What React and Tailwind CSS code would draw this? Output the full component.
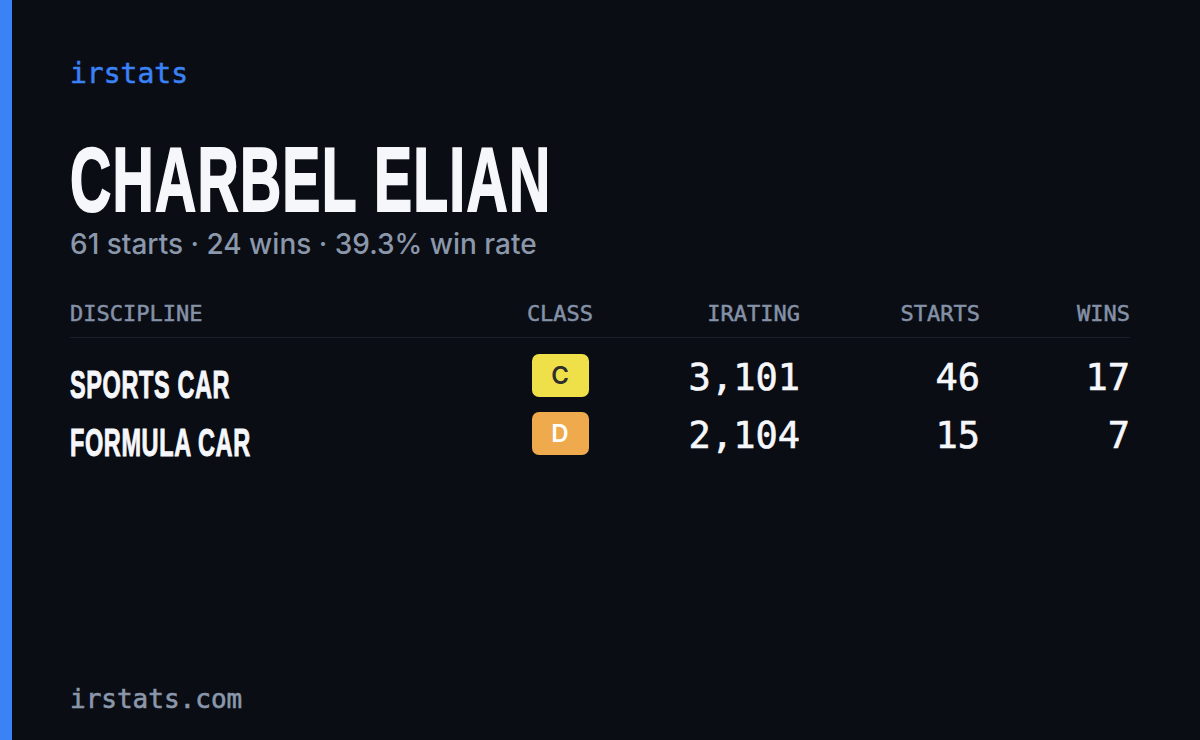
import React from 'react';

const rows = [
  { name: 'SPORTS CAR', cls: 'C', badge: 'bg-[#efe04a] text-[#2e2e2e]', irating: '3,101', starts: '46', wins: '17' },
  { name: 'FORMULA CAR', cls: 'D', badge: 'bg-[#eeaa4c] text-white', irating: '2,104', starts: '15', wins: '7' },
];

const mono = "font-['DejaVu_Sans_Mono','Liberation_Mono',monospace]";
const cond = "font-['Liberation_Sans',Arial,sans-serif] font-bold";

const App = () => {
  return (
    <div className="w-[1200px] h-[740px] flex bg-[#0a0d14] overflow-hidden">
      {/* accent bar */}
      <div className="w-3 shrink-0 bg-[#3b82f6]"></div>

      <div className="flex-1 flex flex-col pl-[58px] pr-[70px] pt-[60px] pb-[28px]">
        <div className={`${mono} text-[28px] leading-none text-[#3b82f6] [-webkit-text-stroke:0.5px_#3b82f6]`}>irstats</div>

        {/* name */}
        <h1 className={`${cond} mt-[47px] text-[90px] leading-none tracking-[2px] text-[#f6f7fb] whitespace-nowrap [-webkit-text-stroke:2px_#f6f7fb]`}>
          <span className="inline-block origin-left scale-x-[0.634]">CHARBEL ELIAN</span>
        </h1>
        <p className="mt-[5px] font-['Inter',sans-serif] font-medium text-[28px] leading-none text-[#8b97ab]">
          61 starts · 24 wins · 39.3% win rate
        </p>

        {/* table */}
        <div className="mt-[45px]">
          <div className={`${mono} grid grid-cols-[420px_140px_170px_180px_150px] text-[22px] leading-none text-[#8491a6] [-webkit-text-stroke:0.5px_#8491a6] pb-[12px] border-b border-[#1b1f29]`}>
            <div>DISCIPLINE</div>
            <div className="text-center">CLASS</div>
            <div className="text-right">IRATING</div>
            <div className="text-right">STARTS</div>
            <div className="text-right">WINS</div>
          </div>

          <div className="pt-[16px]">
            {rows.map((r) => (
              <div key={r.name} className="grid grid-cols-[420px_140px_170px_180px_150px] items-start h-[58px]">
                <div className={`${cond} pt-[12px] text-[38px] leading-none tracking-[1px] text-[#f6f7fb] whitespace-nowrap [-webkit-text-stroke:1px_#f6f7fb]`}>
                  <span className="inline-block origin-left scale-x-[0.618]">{r.name}</span>
                </div>
                <div className="flex justify-center">
                  <div className={`w-[57px] h-[43px] rounded-[7px] flex items-center justify-center font-['Inter',sans-serif] font-semibold text-[24px] ${r.badge}`}>
                    {r.cls}
                  </div>
                </div>
                <div className={`${mono} pt-[5px] text-right text-[37px] leading-none text-[#f6f7fb] [-webkit-text-stroke:0.6px_#f6f7fb]`}>{r.irating}</div>
                <div className={`${mono} pt-[5px] text-right text-[37px] leading-none text-[#f6f7fb] [-webkit-text-stroke:0.6px_#f6f7fb]`}>{r.starts}</div>
                <div className={`${mono} pt-[5px] text-right text-[37px] leading-none text-[#f6f7fb] [-webkit-text-stroke:0.6px_#f6f7fb]`}>{r.wins}</div>
              </div>
            ))}
          </div>
        </div>

        <div className={`${mono} mt-auto text-[26px] leading-none text-[#8b97ab] [-webkit-text-stroke:0.6px_#8b97ab]`}>irstats.com</div>
      </div>
    </div>
  );
};

export default App;
